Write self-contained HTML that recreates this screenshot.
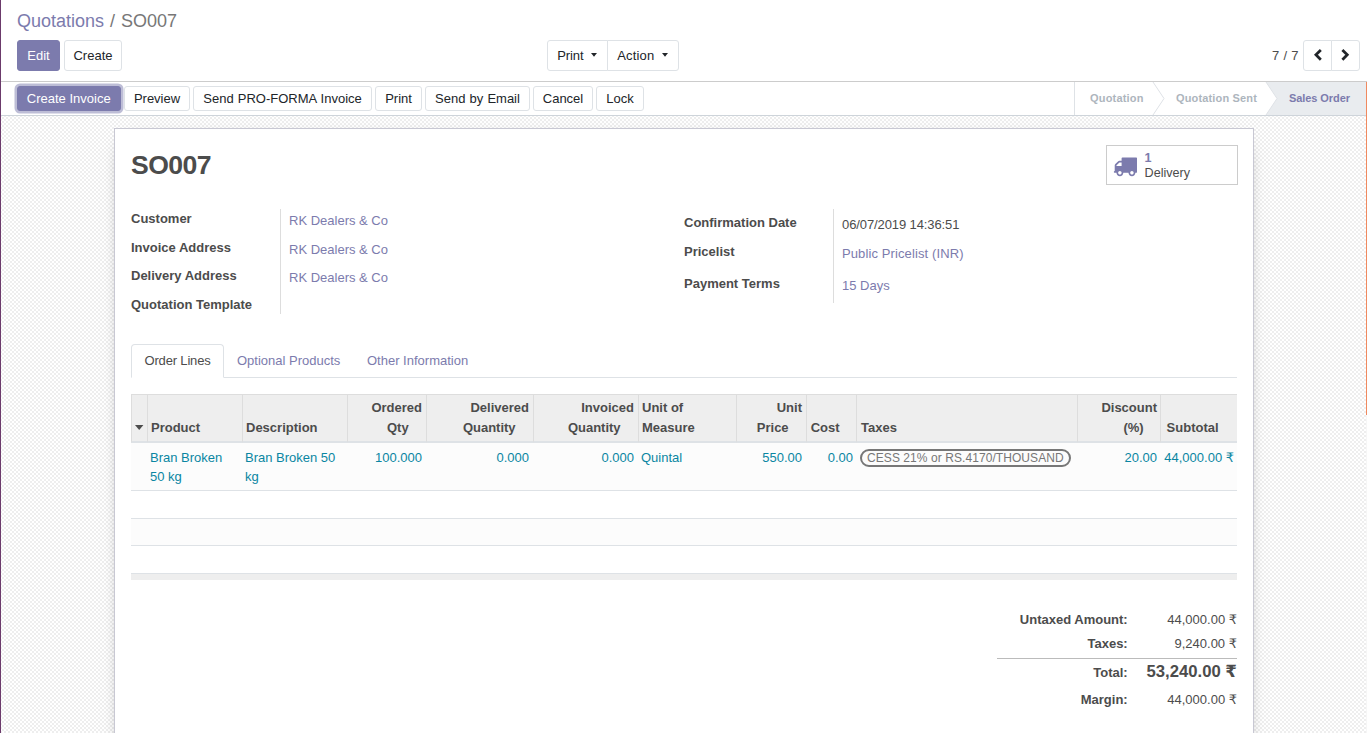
<!DOCTYPE html>
<html lang="en">
<head>
<meta charset="utf-8">
<title>SO007 - Odoo</title>
<style>
*{box-sizing:border-box;}
html,body{margin:0;padding:0;}
body{width:1367px;height:733px;overflow:hidden;position:relative;background:#fff;
 font-family:"Liberation Sans","DejaVu Sans",sans-serif;font-size:13px;line-height:1.5;color:#4c4c4c;}
a{color:#7c7bad;text-decoration:none;}
.abs{position:absolute;}
/* control panel */
#cp{position:absolute;left:0;top:0;width:1367px;height:82px;background:#fff;border-bottom:1px solid #ccc;}
#bc{position:absolute;left:17px;top:9px;font-size:18px;line-height:24px;color:#777;white-space:nowrap;}
#bc a{color:#7c7bad;}
#bc .sl{padding:0 1px 0 1px;}
.btn{position:absolute;height:31px;line-height:29px;border:1px solid #dee2e6;border-radius:3px;background:#fff;color:#212529;
 font-size:13px;text-align:center;white-space:nowrap;padding:0;}
.btn.pri{background:#7c7bad;border-color:#7c7bad;color:#fff;}
.btn.dd{text-align:left;}
.caret{position:absolute;top:12px;width:0;height:0;border-left:2.8px solid transparent;border-right:2.8px solid transparent;border-top:3.5px solid #212529;}
/* statusbar */
#sb{position:absolute;left:0;top:82px;width:1367px;height:34px;background:#fff;border-bottom:1px solid #ced4da;}
.sbtn{position:absolute;top:4px;height:25px;line-height:23px;border:1px solid #dee2e6;border-radius:3px;background:#fff;color:#212529;font-size:13px;text-align:center;white-space:nowrap;}
.sbtn.pri{background:#7c7bad;border-color:#7c7bad;color:#fff;box-shadow:0 0 0 2.5px rgba(124,123,173,.5);}
/* content */
#content{position:absolute;left:0;top:116px;width:1367px;height:617px;background-color:#fff;}
#sheet{position:absolute;left:114px;top:12px;width:1140px;height:640px;background:#fff;border:1px solid #c8c8d3;box-shadow:0 5px 20px -15px #000;}
#in{position:absolute;left:1px;top:1px;width:1137px;height:630px;}
h1{position:absolute;left:15px;top:15px;margin:0;font-size:26.6px;letter-spacing:-0.55px;line-height:40px;font-weight:bold;color:#4c4c4c;}
.lbl{position:absolute;font-weight:bold;color:#4c4c4c;white-space:nowrap;line-height:20px;}
.val{position:absolute;white-space:nowrap;line-height:20px;}
.vsep{position:absolute;width:1px;background:#ddd;}
#stat{position:absolute;left:990px;top:15px;width:132px;height:40px;border:1px solid #ccc;background:#fff;}
#stat .n{position:absolute;left:37.6px;top:5px;line-height:15px;color:#7c7bad;font-size:12.6px;font-weight:bold;}
#stat .t{position:absolute;left:37.6px;top:19.6px;line-height:15px;color:#4c4c4c;font-size:12.6px;}
/* tabs */
#tabs{position:absolute;left:15px;top:214px;width:1106px;height:34px;border-bottom:1px solid #dee2e6;}
.tab{position:absolute;top:0;height:34px;line-height:33px;color:#7c7bad;white-space:nowrap;}
.tab.act{border:1px solid #dee2e6;border-bottom-color:#fff;border-radius:4px 4px 0 0;background:#fff;color:#4c4c4c;text-align:left;padding-left:12.5px;line-height:31px;letter-spacing:-0.17px;}
/* table */
#tbl{position:absolute;left:15px;top:264px;width:1106px;border-collapse:separate;border-spacing:0;table-layout:fixed;}
#tbl th{background:#eee;font-weight:bold;color:#4c4c4c;vertical-align:bottom;padding:3px 4px 3px 3px;line-height:20px;border-left:1px solid #ddd;border-top:1px solid #ddd;border-bottom:2px solid #dee2e6;text-align:left;height:49px;}
#tbl th.r,#tbl td.r{text-align:right;}
#tbl th i{display:inline-block;width:13.4px;height:1px;}
#tbl td{padding:5px 4px 3px 3px;line-height:19px;vertical-align:top;color:#0a86a2;}
#tbl th:nth-child(9),#tbl td:nth-child(9),#tbl th:nth-child(11),#tbl td:nth-child(11){padding-right:3px;}
#tbl th:nth-child(10),#tbl td:nth-child(10){padding-left:4px;}
#tbl th:nth-child(12){padding-right:5px;}
#tbl td:nth-child(12){padding-right:3px;}
#tbl tbody tr.data td{background:#fcfcfc;height:47px;}
#tbl tbody tr.e td{border-top:1px solid #dee2e6;padding:0;}
#tbl tfoot td{background:#eee;height:7px;padding:0;border-top:1px solid #dee2e6;}
.tag{display:inline-block;border:2px solid #777;border-radius:9px;line-height:12px;font-size:12px;padding:1px 5px;color:#777;height:18px;letter-spacing:0.07px;}
/* totals */
.tl{position:absolute;right:125.3px;font-weight:bold;white-space:nowrap;line-height:20px;text-align:right;}
.tv{position:absolute;right:16px;white-space:nowrap;line-height:20px;text-align:right;}
</style>
</head>
<body>
<div id="cp">
  <div id="bc"><a>Quotations</a><span class="sl"> / </span>SO007</div>
  <div class="btn pri" style="left:17px;top:40px;width:43px;">Edit</div>
  <div class="btn" style="left:64px;top:40px;width:58px;">Create</div>
  <div class="btn dd" style="left:547px;top:40px;width:61px;border-radius:3px 0 0 3px;padding-left:9.2px;letter-spacing:-0.1px;">Print<svg class="abs" style="left:43.3px;top:11.7px;" width="6" height="4" viewBox="0 0 6 4"><path d="M0 0 H6 L3 3.7 Z" fill="#212529"/></svg></div>
  <div class="btn dd" style="left:607px;top:40px;width:72px;border-radius:0 3px 3px 0;padding-left:9.2px;letter-spacing:0.17px;">Action<svg class="abs" style="left:54.3px;top:11.7px;" width="6" height="4" viewBox="0 0 6 4"><path d="M0 0 H6 L3 3.7 Z" fill="#212529"/></svg></div>
  <div class="abs" style="left:1272px;top:46px;line-height:20px;color:#4c4c4c;word-spacing:0.6px;">7 / 7</div>
  <div class="btn" style="left:1303px;top:40px;width:29px;border-radius:3px 0 0 3px;"></div>
  <div class="btn" style="left:1331px;top:40px;width:29px;border-radius:0 3px 3px 0;"></div>
  <svg class="abs" style="left:1303px;top:40px;" width="57" height="31" viewBox="1303 40 57 31">
    <path d="M1320.82 49.98 L1315.95 54.85 L1320.82 59.72" fill="none" stroke="#212529" stroke-width="2.76"/>
    <path d="M1342.38 49.98 L1347.25 54.85 L1342.38 59.72" fill="none" stroke="#212529" stroke-width="2.76"/>
  </svg>
</div>

<div id="sb">
  <div class="sbtn pri" style="left:17px;width:103.5px;">Create Invoice</div>
  <div class="sbtn" style="left:124px;width:66px;">Preview</div>
  <div class="sbtn" style="left:193px;width:179px;word-spacing:0.5px;">Send PRO-FORMA Invoice</div>
  <div class="sbtn" style="left:375px;width:47px;">Print</div>
  <div class="sbtn" style="left:425px;width:105px;word-spacing:0.5px;">Send by Email</div>
  <div class="sbtn" style="left:533px;width:60px;">Cancel</div>
  <div class="sbtn" style="left:596px;width:48px;">Lock</div>
  <svg class="abs" style="left:1070px;top:0;" width="297" height="33" viewBox="0 0 297 33">
    <rect x="4.5" y="-1" width="300" height="35" fill="#fff" stroke="#dee2e6"/>
    <path d="M196 0 H297 V33 H196 L207 16.5 Z" fill="#e9ecef"/>
    <path d="M83 0 L94 16.5 L83 33" fill="none" stroke="#dee2e6"/>
    <path d="M196 0 L207 16.5 L196 33" fill="none" stroke="#dee2e6"/>
    <text x="20" y="20" font-family="Liberation Sans, sans-serif" font-size="11" font-weight="bold" fill="#adb5bd" textLength="53.4" lengthAdjust="spacing">Quotation</text>
    <text x="106" y="20" font-family="Liberation Sans, sans-serif" font-size="11" font-weight="bold" fill="#adb5bd" textLength="80.8" lengthAdjust="spacing">Quotation Sent</text>
    <text x="219" y="20" font-family="Liberation Sans, sans-serif" font-size="11" font-weight="bold" fill="#7c7bad" textLength="61" lengthAdjust="spacing">Sales Order</text>
  </svg>
</div>

<div id="content">
  <svg class="abs" style="left:0;top:0;" width="1367" height="617"><defs><pattern id="chk" width="4" height="4" patternUnits="userSpaceOnUse"><rect x="0" y="0" width="2" height="1" fill="#eeeeee"/><rect x="0" y="3" width="2" height="1" fill="#eeeeee"/><rect x="2" y="1" width="2" height="2" fill="#eeeeee"/></pattern></defs><rect width="1367" height="617" fill="url(#chk)"/></svg>
  <div id="sheet"><div id="in">
    <h1>SO007</h1>
    <div id="stat">
      <svg class="abs" style="left:5.95px;top:7.59px;" width="24.1" height="23.9" viewBox="0 0 1792 1792" preserveAspectRatio="none"><path fill="#7c7bad" d="M640 1408q0-52-38-90t-90-38-90 38-38 90 38 90 90 38 90-38 38-90zM256 896h384v-256h-158q-13 0-22 9l-195 195q-9 9-9 22v30zM1536 1408q0-52-38-90t-90-38-90 38-38 90 38 90 90 38 90-38 38-90zM1792 320v1024q0 15-4 26.500t-13.500 18.500-16.500 11.500-23.500 6-22.500 2-25.500 0-22.500-.5q0 106-75 181t-181 75-181-75-75-181h-384q0 106-75 181t-181 75-181-75-75-181h-64q-3 0-22.500.5t-25.500 0-22.500-2-23.500-6-16.500-11.500-13.500-18.500-4-26.500q0-26 19-45t45-19v-320q0-8-.5-35t0-38 2.500-34.500 6.500-37 14-30.500 22.500-30l198-198q19-19 50.500-32t58.500-13h160v-192q0-26 19-45t45-19h1024q26 0 45 19t19 45z"/></svg>
      <div class="n">1</div><div class="t">Delivery</div>
    </div>

    <div class="lbl" style="left:15px;top:79px;">Customer</div>
    <div class="lbl" style="left:15px;top:108px;">Invoice Address</div>
    <div class="lbl" style="left:15px;top:136px;">Delivery Address</div>
    <div class="lbl" style="left:15px;top:165px;">Quotation Template</div>
    <div class="vsep" style="left:164px;top:79px;height:105px;"></div>
    <a class="val" style="left:173px;top:81px;">RK Dealers &amp; Co</a>
    <a class="val" style="left:173px;top:110px;">RK Dealers &amp; Co</a>
    <a class="val" style="left:173px;top:138px;">RK Dealers &amp; Co</a>

    <div class="lbl" style="left:568px;top:83px;">Confirmation Date</div>
    <div class="lbl" style="left:568px;top:112px;">Pricelist</div>
    <div class="lbl" style="left:568px;top:144px;">Payment Terms</div>
    <div class="vsep" style="left:717px;top:79px;height:94px;"></div>
    <div class="val" style="left:726px;top:85px;letter-spacing:-0.1px;">06/07/2019 14:36:51</div>
    <a class="val" style="left:726px;top:114px;letter-spacing:0.11px;">Public Pricelist (INR)</a>
    <a class="val" style="left:726px;top:146px;">15 Days</a>

    <div id="tabs">
      <div class="tab act" style="left:0;width:93px;">Order Lines</div>
      <div class="tab" style="left:106px;">Optional Products</div>
      <div class="tab" style="left:236px;">Other Information</div>
    </div>

    <table id="tbl">
      <colgroup>
        <col style="width:16px"><col style="width:95px"><col style="width:105px"><col style="width:79px"><col style="width:107px">
        <col style="width:105px"><col style="width:98px"><col style="width:70px"><col style="width:50px"><col style="width:221px"><col style="width:83px"><col style="width:77px">
      </colgroup>
      <thead><tr>
        <th style="padding:0;position:relative;"><svg width="9" height="6" viewBox="0 0 9 6" style="position:absolute;left:2.8px;top:29.9px;"><path d="M0 0 H8.4 L4.2 5 Z" fill="#4c4c4c"/></svg></th>
        <th>Product<i></i></th><th>Description<i></i></th><th class="r">Ordered Qty<i></i></th><th class="r">Delivered Quantity<i></i></th>
        <th class="r">Invoiced Quantity<i></i></th><th>Unit of Measure<i></i></th><th class="r">Unit<br>Price<i></i></th><th class="r" style="white-space:nowrap;">Cost<i></i></th><th>Taxes</th><th class="r">Discount (%)<i></i></th><th class="r">Subtotal<i></i></th>
      </tr></thead>
      <tbody>
        <tr class="data"><td></td><td>Bran Broken 50 kg</td><td>Bran Broken 50 kg</td><td class="r">100.000</td><td class="r">0.000</td><td class="r">0.000</td>
          <td>Quintal</td><td class="r">550.00</td><td class="r">0.00</td><td><span class="tag">CESS 21% or RS.4170/THOUSAND</span></td><td class="r">20.00</td><td class="r" style="white-space:nowrap;">44,000.00 ₹</td></tr>
        <tr class="e"><td colspan="12" style="height:28px;"></td></tr>
        <tr class="e"><td colspan="12" style="height:27px;background:#fcfcfc;"></td></tr>
        <tr class="e"><td colspan="12" style="height:28px;"></td></tr>
      </tbody>
      <tfoot><tr><td colspan="12"></td></tr></tfoot>
    </table>

    <div class="tl" style="top:480px;">Untaxed Amount:</div><div class="tv" style="top:480px;">44,000.00 ₹</div>
    <div class="tl" style="top:504px;">Taxes:</div><div class="tv" style="top:504px;">9,240.00 ₹</div>
    <div class="abs" style="left:881px;top:528px;width:240px;height:1px;background:#bbb;"></div>
    <div class="tl" style="top:533px;">Total:</div><div class="tv" style="top:528px;font-size:16.7px;font-weight:bold;line-height:28px;">53,240.00 ₹</div>
    <div class="tl" style="top:560px;">Margin:</div><div class="tv" style="top:560px;">44,000.00 ₹</div>
  </div></div>
</div>

<div class="abs" style="left:0;top:0;width:1px;height:733px;background:#6b3a6b;"></div>
<div class="abs" style="left:1366px;top:82px;width:1px;height:651px;background:#f6f6f6;"></div>
<div class="abs" style="left:1366px;top:82px;width:1px;height:333px;background:#f0895f;"></div>
</body>
</html>
